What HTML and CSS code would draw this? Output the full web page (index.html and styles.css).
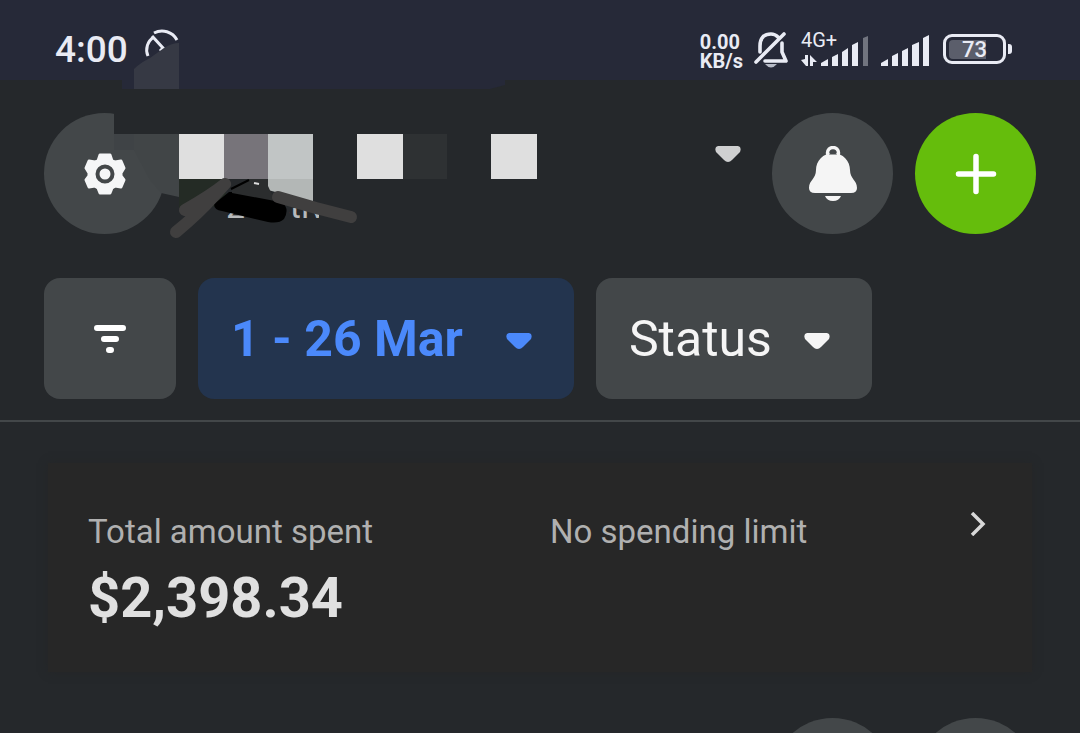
FILE: index.html
```html
<!DOCTYPE html>
<html lang="en">
<head>
<meta charset="utf-8">
<meta name="viewport" content="width=device-width, initial-scale=1">
<title>Ads overview</title>
<link rel="stylesheet" href="styles.css">
</head>
<body>
<div class="status-bar">
  <span class="clock">4:00</span>
  <svg class="gauge" width="36" height="36" viewBox="0 0 36 36" fill="none" stroke="#e9ebf4" stroke-width="3"><path d="M4 28A15 15 0 0 1 10 9M10 5A17 17 0 0 1 33 12M8 8L19 20L16 23"/></svg>
  <div class="indicators">
    <span class="speed"><span>0.00</span><span>KB/s</span></span>
    <svg class="muted" width="36" height="40" viewBox="0 0 36 40" fill="none" stroke="#e9ebf4" stroke-width="3.600" stroke-linecap="round" stroke-linejoin="round"><path d="M7 22V16C7 8 11 4 18 4C21 4 23 5 25 7M29 13V22L33 31H12M3 32L31 4"/><path d="M12 34H24Q18 41 12 34Z" fill="#b6bac6" stroke="none"/></svg>
    <span class="mobile">
      <svg width="68" height="34" viewBox="0 0 68 34" fill="#e9ebf4"><path d="M0 27L4 26V22H7V33H5ZM9 22L16 29H12V33H9ZM20 33V30L27 26V33ZM31 33V24L37 21V33ZM41 33V19L47 15V33ZM51 33V12L57 9V33Z"/><path d="M62 33V5L67 3V33Z" fill="#71747f"/></svg>
      <span class="network">4G+</span>
    </span>
    <svg class="signal" width="49" height="34" viewBox="0 0 49 34" fill="#e9ebf4"><path d="M0 33V30L7 26V33ZM11 33V23L17 20V33ZM21 33V18L27 15V33ZM31 33V12L38 9V33ZM42 33V5L48 2V33Z"/></svg>
    <span class="battery"><span class="level">73</span></span>
  </div>
</div>

<header class="top">
  <button class="round" aria-label="Settings">
    <svg width="42" height="44" viewBox="0 0 42 44"><path fill="#f5f6f7" stroke="#f5f6f7" stroke-width="3" stroke-linejoin="round" d="M16 3H26L28 9L31 10L37 9L40 16L37 21V24L40 28L37 35L31 34L28 36L26 41H16L14 36L11 34L5 35L2 28L5 24V21L2 16L5 9L11 10L14 9Z"/><circle cx="21" cy="22" r="7.500" fill="#f5f6f7" stroke="#434749" stroke-width="4"/></svg>
  </button>
  <button class="account" aria-label="Choose account">
    <span class="active">2 active</span>
    <svg class="caret" width="28" height="18" viewBox="0 0 28 18"><path fill="#cfd0d1" d="M4 1H24Q28 2 26 7L18 15Q14 19 10 15L2 7Q0 2 4 1Z"/></svg>
  </button>
  <button class="round" aria-label="Notifications">
    <svg width="50" height="56" viewBox="0 0 50 56"><circle cx="25" cy="7" r="5.500" fill="none" stroke="#f5f5f5" stroke-width="3.500"/><path fill="#f5f5f5" d="M25 7C35 7 42 15 42 24C42 33 49 34 49 42Q49 47 43 47H7Q1 47 1 42C1 34 8 33 8 24C8 15 15 7 25 7Z"/><path fill="#434749" d="M21 8.500Q25 2.500 29 8.500Z"/><path fill="#f5f5f5" d="M17 50H33Q31 55 25 55Q19 55 17 50Z"/></svg>
  </button>
  <button class="round create" aria-label="Create">
    <svg width="42" height="42" viewBox="0 0 42 42" stroke="#fff" stroke-width="5.500" stroke-linecap="round"><path d="M21 3.500V38.500M3.500 21H38.500"/></svg>
  </button>
</header>

<nav class="filters">
  <button class="chip filter" aria-label="Filter">
    <svg width="34" height="32" viewBox="0 0 34 32" stroke="#fff" stroke-width="6" stroke-linecap="round"><path d="M4 5H30M11 16H23M16 27H18"/></svg>
  </button>
  <button class="chip date">1 - 26 Mar
    <svg class="caret" width="28" height="18" viewBox="0 0 28 18"><path fill="#4b89fb" d="M4 1H24Q28 2 26 7L18 15Q14 19 10 15L2 7Q0 2 4 1Z"/></svg>
  </button>
  <button class="chip status">Status
    <svg class="caret" width="28" height="18" viewBox="0 0 28 18"><path fill="#f5f5f5" d="M4 1H24Q28 2 26 7L18 15Q14 19 10 15L2 7Q0 2 4 1Z"/></svg>
  </button>
</nav>

<main>
  <section class="card">
    <div>
      <p class="label">Total amount spent</p>
      <p class="amount">$2,398.34</p>
    </div>
    <p class="label">No spending limit</p>
    <button class="more" aria-label="View spending">
      <svg width="20" height="24" viewBox="0 0 20 24" fill="none" stroke="#d8d8d8" stroke-width="3.500"><path d="M2 1L13 12L2 23"/></svg>
    </button>
  </section>
  <div class="actions">
    <button class="round" aria-label="Search"></button>
    <button class="round" aria-label="More"></button>
  </div>
</main>

<svg class="redaction" width="560" height="250" viewBox="0 0 560 250" aria-hidden="true">
  <path fill="#262938" d="M122 80H505V85L490 89H122Z"/>
  <path fill="#363944" d="M134 69Q140 63 150 58L164 48Q172 43 179 43V89H134Z"/>
  <path fill="#25282b" d="M114 110H180V134H114Z"/>
  <path fill="#3f4346" d="M114 134H134V150H114Z"/>
  <path fill="#414547" d="M134 134H179V197L161 193L150 180L134 150Z"/>
  <path fill="#25282b" d="M222 178H350V224H319V208H289V224H262V208H222Z"/>
  <path fill="#242b25" d="M179 178H226V206L179 208Z"/>
  <path fill="#dfdfdf" d="M179 134H224V179H179ZM357 134H403V179H357ZM491 134H537V179H491Z"/>
  <path fill="#77747a" d="M224 134H268V179H224Z"/>
  <path fill="#c1c5c5" d="M268 134H313V179H268Z"/>
  <path fill="#b3b7b6" d="M268 179H313V202L268 190Z"/>
  <path fill="#2e3133" d="M403 134H447V179H403Z"/>
  <path fill="#000" d="M229 192Q250 191 282 202Q290 209 284 219Q279 224 268 222L222 211Q214 210 214 204Z"/>
  <path fill="#2b2d2e" d="M232 190L250 179H268V186L275 201L232 193Z"/>
  <path fill="none" stroke="#000" stroke-width="2" d="M231 189L249 180"/>
  <path fill="none" stroke="#ddd" stroke-width="2" d="M254 183L259 184"/>
  <g fill="none" stroke="#403f3f" stroke-width="12" stroke-linecap="round" stroke-linejoin="round"><path d="M185 210Q210 196 225 184L214 196Q198 214 176 232"/><path d="M278 197L316 208L351 217"/></g>
</svg>
</body>
</html>
```
FILE: styles.css
```css
* { box-sizing: border-box; }
body {
  margin: 0;
  height: 100vh;
  overflow: hidden;
  position: relative;
  background: #25282b;
  color: #f5f5f5;
  font-family: Roboto, "Liberation Sans", sans-serif;
}
button {
  border: 0;
  padding: 0;
  background: none;
  color: inherit;
  font: inherit;
  cursor: pointer;
}
svg { display: block; flex: none; }
p { margin: 0; }

.status-bar {
  display: flex;
  align-items: center;
  height: 80px;
  padding: 20px 68px 0 55px;
  background: #262938;
  color: #e9ebf4;
}
.clock { font-size: 37px; font-weight: 500; line-height: 44px; }
.gauge { margin: 0 0 8px 16px; }
.indicators { display: flex; align-items: center; margin-left: auto; }
.speed { display: grid; padding-top: 4px; font-size: 20px; font-weight: 700; line-height: 19px; }
.muted { margin-left: 10px; }
.mobile { position: relative; margin-left: 12px; }
.network {
  position: absolute;
  left: 0;
  top: -3px;
  font-size: 20px;
  line-height: 20px;
}
.signal { margin-left: 12px; }
.battery {
  position: relative;
  width: 63px;
  height: 30px;
  margin: 0 6px 2px 13px;
  padding: 3px;
  border: 3px solid #e9ebf4;
  border-radius: 9px;
}
.battery::after {
  content: "";
  position: absolute;
  right: -9px;
  top: 7px;
  width: 4px;
  height: 10px;
  border-radius: 0 3px 3px 0;
  background: #e9ebf4;
}
.level {
  display: block;
  border-radius: 4px;
  background: linear-gradient(90deg, #5b5e6b 73%, transparent 73%);
  font-size: 22px;
  font-weight: 500;
  line-height: 19px;
  text-align: center;
}

.top { display: flex; gap: 22px; padding: 33px 44px 44px; }
.round {
  display: grid;
  place-items: center;
  flex: none;
  width: 121px;
  height: 121px;
  border-radius: 50%;
  background: #434749;
}
.create { background: #65bd0c; }
.account {
  display: flex;
  flex: 1;
  justify-content: space-between;
  padding: 32px 8px 8px 39px;
}
.active { align-self: flex-end; font-size: 34px; line-height: 40px; color: #b8babb; }

.filters {
  display: flex;
  gap: 22px;
  padding: 0 44px 21px;
  border-bottom: 2px solid #434749;
}
.chip {
  display: flex;
  align-items: center;
  height: 121px;
  padding: 0 41px 0 33px;
  border-radius: 16px;
  background: #434749;
  font-size: 50px;
  white-space: nowrap;
}
.chip .caret { margin-top: 4px; }
.filter { justify-content: center; width: 132px; padding: 0; }
.date { gap: 42px; background: #23344e; color: #4b89fb; font-weight: 700; }
.status { gap: 31px; }

.card {
  display: grid;
  grid-template-columns: 11fr 10fr 20px;
  align-items: start;
  margin: 41px 48px 46px;
  padding: 49px 42px 42px 40px;
  background: #272727;
  box-shadow: 0 0 8px #242627;
}
.label { font-size: 33px; line-height: 40px; color: #b0b0b0; }
.amount { margin-top: 14px; font-size: 56px; font-weight: 700; line-height: 64px; color: #e0e0e0; }
.actions { display: flex; justify-content: flex-end; gap: 22px; padding: 0 44px; }

.redaction { position: absolute; left: 0; top: 0; pointer-events: none; }
```
